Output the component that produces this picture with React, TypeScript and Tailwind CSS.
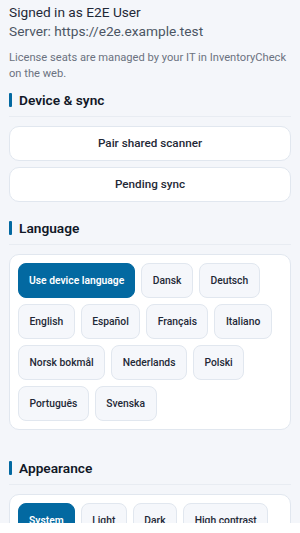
import React from "react";

function Heading({ title }: { title: string }) {
  return (
    <div className="flex items-center gap-[7px] border-b border-[#e8ecf2] pb-[9px]">
      <div className="h-[14px] w-[3px] rounded-[1px] bg-[#0369a1]" />
      <div className="text-[13.7px] font-semibold leading-[14px] text-[#111827]">{title}</div>
    </div>
  );
}

function Chip({ label, active }: { label: string; active?: boolean }) {
  return (
    <div
      className={
        active
          ? "flex h-[35px] items-center rounded-[8px] border border-[#0369a1] bg-[#0369a1] px-[10px] text-[10.3px] font-semibold text-white"
          : "flex h-[35px] items-center rounded-[8px] border border-[#e1e7ef] bg-[#f5f7fb] px-[10.5px] text-[10.3px] font-medium text-[#1f2937]"
      }
    >
      {label}
    </div>
  );
}

export default function App() {
  const langs = [
    "Dansk",
    "Deutsch",
    "English",
    "Español",
    "Français",
    "Italiano",
    "Norsk bokmål",
    "Nederlands",
    "Polski",
    "Português",
    "Svenska",
  ];
  return (
    <div className="flex h-[533px] w-[300px] flex-col overflow-hidden bg-[#f4f6fa] font-[Roboto,'Noto_Sans',sans-serif]">
      <div className="flex-1 overflow-hidden px-[9px] pt-[3px]">
        <div className="text-[13.7px] leading-[19px] text-[#1f2937]">Signed in as E2E User</div>
        <div className="text-[13.7px] leading-[19px] text-[#4b5563]">Server: https://e2e.example.test</div>
        <div className="mt-[9px] text-[11.15px] leading-[16px] text-[#6b7280]">
          License seats are managed by your IT in InventoryCheck on the web.
        </div>

        <div className="mt-[11px]">
          <Heading title="Device & sync" />
        </div>
        <div className="mt-[9px] flex flex-col gap-[6px]">
          <div className="flex h-[35px] items-center justify-center rounded-[10px] border border-[#e1e7ef] bg-white text-[11.7px] font-medium text-[#1f2937]">
            Pair shared scanner
          </div>
          <div className="flex h-[35px] items-center justify-center rounded-[10px] border border-[#e1e7ef] bg-white text-[11.7px] font-medium text-[#1f2937]">
            Pending sync
          </div>
        </div>

        <div className="mt-[19px]">
          <Heading title="Language" />
        </div>
        <div className="mt-[9px] rounded-[10px] border border-[#e1e7ef] bg-white p-[8px]">
          <div className="flex flex-wrap gap-[6px]">
            <Chip label="Use device language" active />
            {langs.map((l) => (
              <Chip key={l} label={l} />
            ))}
          </div>
        </div>

        <div className="mt-[31px]">
          <Heading title="Appearance" />
        </div>
        <div className="mt-[9px] rounded-[10px] border border-[#e1e7ef] bg-white p-[8px]">
          <div className="flex flex-wrap gap-[6px]">
            <Chip label="System" active />
            <Chip label="Light" />
            <Chip label="Dark" />
            <Chip label="High contrast" />
          </div>
        </div>
      </div>
      <div className="h-[10px] shrink-0 bg-white" />
    </div>
  );
}
